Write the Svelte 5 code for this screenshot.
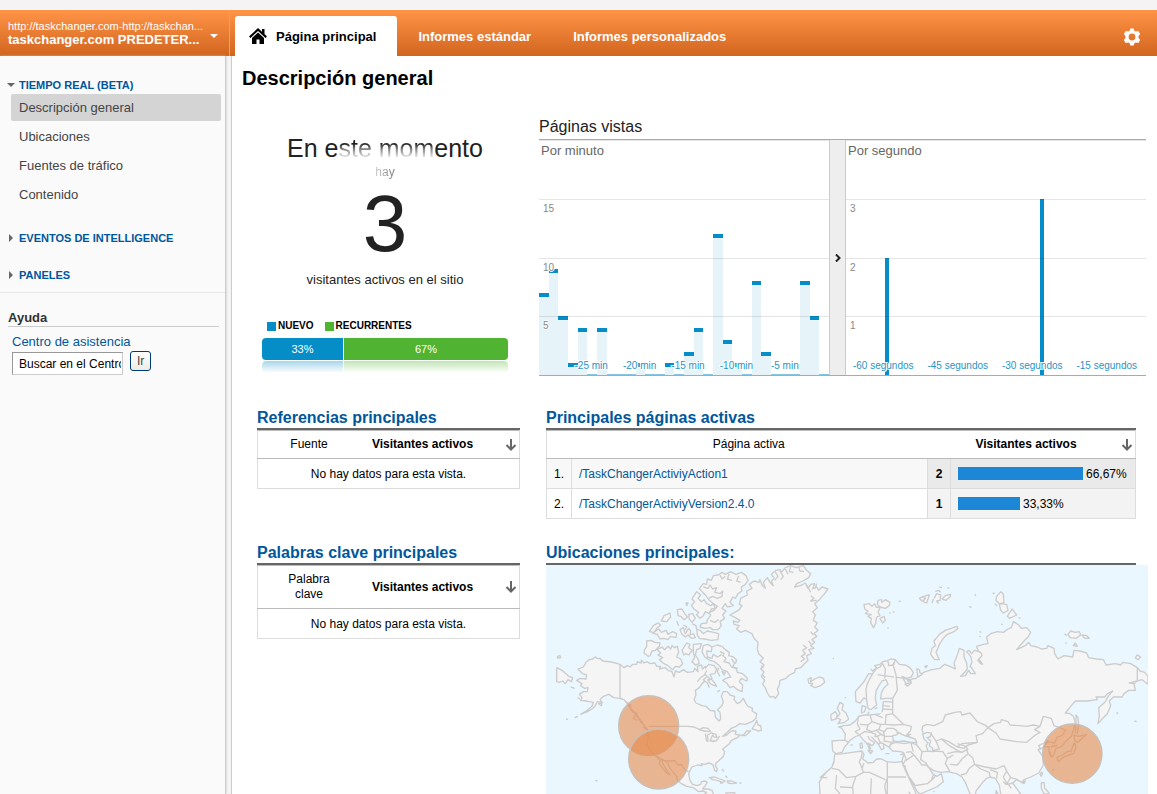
<!-- App.svelte -->
<script>
    const navItems = ["Descripción general", "Ubicaciones", "Fuentes de tráfico", "Contenido"];

    // page views, one value per minute / per second
    const minutes = [7, 9, 5, 1, 4, 0, 4, 0, 0, 0, 1, 0, 0, 1, 0, 2, 4, 0, 12, 3, 1, 0, 8, 2, 0, 0, 0, 8, 5, 0];
    const minuteLabels = ["-25 min", "-20 min", "-15 min", "-10 min", "-5 min"];
    const seconds = [
        { ago: 52.3, value: 2 },
        { ago: 21.3, value: 3 },
    ];
    const secondLabels = ["-60 segundos", "-45 segundos", "-30 segundos", "-15 segundos"];

    const activePages = [
        { name: "/TaskChangerActiviyAction1", count: 2, percent: 66.67 },
        { name: "/TaskChangerActiviyVersion2.4.0", count: 1, percent: 33.33 },
    ];

    const emptyTables = [
        { title: "Referencias principales", column: "Fuente" },
        { title: "Palabras clave principales", column: "Palabra clave" },
    ];

    // western half of the map
    const west = [
        // mainland
        "M166,366 172,371 180,370 188,378 215,381 240,388 252,398 262,392 270,396 278,388 290,388 292,380 303,384 304,376 312,384 322,380 330,386 345,384 350,394 362,394 358,402 376,398 384,406 396,410 402,426 406,408 418,412 430,404 442,412 460,410 464,400 474,410 472,394 484,390 488,402 496,394 500,408 494,418 504,426 512,434 498,434 486,446 478,458 466,466 468,480 462,494 468,504 486,512 498,514 510,526 524,528 526,546 537,558 542,552 540,532 532,524 546,512 550,500 544,484 550,470 562,470 570,480 584,484 582,494 592,506 600,502 610,490 618,506 624,514 638,520 636,528 650,536 648,550 636,560 616,568 600,566 588,574 574,580 562,592 548,604 560,600 574,588 588,588 586,598 600,600 592,608 574,616 568,626 556,636 548,642 554,650 550,664 538,676 528,684 526,692 532,702 530,710 524,706 518,688 506,684 494,688 484,686 486,692 472,690 456,696 450,706 446,718 450,736 458,748 470,752 482,748 484,740 496,738 502,742 494,754 488,762 504,762 516,766 520,777 530,790 480,790 500,772 488,768 476,770 460,758 440,754 424,746 412,736 410,724 400,712 390,700 384,684 372,676 364,674 370,688 378,702 390,720 380,714 370,702 358,686 360,676 346,662 336,652 326,638 320,628 324,614 324,596 322,582 312,574 306,560 296,550 288,536 274,522 268,508 252,496 240,490 222,488 206,478 190,484 180,494 186,502 172,500 166,512 156,522 142,530 122,538 142,526 156,514 160,502 148,500 138,498 122,496 126,488 118,478 130,470 142,470 144,458 134,460 122,452 126,446 110,436 120,430 138,432 140,420 128,416 114,402 130,396 138,382 148,374 158,372z",
        // borders and lakes
        "M240,388V490M326,574H444L462,576 480,584 498,590M540,604 524,612 518,622M346,662 372,676 390,678 404,676 414,690 424,688 436,706 446,710",
        "M478,584 490,578 504,580 512,590 494,588zM496,596 500,618 504,618 502,600 514,594 528,598 530,608 522,606 518,600 510,618 528,618 536,610",
        "M240,490 252,494 266,512 276,528 290,540 300,556 316,576M262,504 272,510 268,518M278,528 290,534 284,540 296,548M284,544 280,550 292,556M300,560 312,570 320,584 308,576",
        // aleutians, hawaii, siberian tip
        "M50,398 66,406 78,416 86,424 98,428 94,440 84,434 76,446 68,438 58,442 50,440zM52,364 60,362 62,368 54,370zM92,456 104,460M112,488 120,492M78,552 84,554M104,548 114,544M166,736 172,738M176,506 186,504 184,512z",
        // arctic islands
        "M320,318 334,316 344,322 360,324 358,334 346,346 336,348 330,362 324,364 312,354 314,344 320,334z",
        "M352,344 366,336 374,344 384,334 392,342 396,332 404,338 412,334 416,352 410,366 422,372 428,386 418,396 406,394 398,404 384,392 372,386 358,374 368,368 354,360 362,354z",
        "M430,340 440,324 450,328 446,338 456,346 446,360 438,356 432,360 426,346zM460,328 484,326 480,340 470,344 466,360 474,372 478,386 466,390 456,380 464,368 460,352z",
        "M490,332 504,328 516,336 514,350 500,348 502,366 516,370 520,358 532,366 546,358 558,370 552,380 568,384 574,396 588,400 592,412 608,416 622,430 620,438 604,430 598,440 608,450 606,470 592,464 580,454 570,458 560,444 548,436 558,430 572,426 562,410 546,404 540,394 524,380 510,376 494,366 486,350z",
        "M516,336 532,330 546,334 556,344 568,352 566,362 580,366 590,376 586,386M540,350 552,356 548,364M574,372 584,384 578,396 594,400",
        "M470,282 480,286 490,296 502,288 520,292 536,296 534,314 514,316 494,312 478,310 472,300zM420,284 430,278 436,296 446,280 452,288 450,300 460,296 466,308 454,310 444,300 436,306 426,298z",
        "M328,290 340,272 354,264 362,270 350,280 342,292zM338,294 356,282 364,292 378,286 384,298 398,290 410,296 408,308 392,304 384,314 372,310 360,312 352,298z",
        "M364,258 372,242 390,234 392,246 380,260zM412,224 426,222 434,236 442,246 432,254 422,244 414,242zM446,238 458,236 466,250 456,262 448,252zM438,204 444,204 440,212zM410,258 416,272M456,266 468,272 470,284M430,270 440,276 436,284",
        "M462,182 470,170 482,180 474,190 484,200 492,194 500,206 512,212 520,206 526,220 514,222 508,236 496,230 490,242 480,250 470,240 476,232 462,222 454,212 464,200 456,192z",
        "M478,160 490,146 500,148 502,132 514,136 520,122 534,120 546,112 556,118 572,110 588,118 604,112 618,122 624,136 616,148 604,156 606,168 594,176 586,190 578,186 570,202 580,212 562,216 556,206 546,220 558,228 548,240 554,250 540,260 544,272 534,284 518,284 512,278 494,280 480,276 484,266 500,264 502,254 512,242 508,232 522,226 532,214 520,206 508,196 498,182 488,172z",
        "M490,156 504,160 510,150 518,162 530,158 524,172 540,176 548,168 546,184 532,190 518,184 506,190M540,120 546,132 556,124M568,116 562,132 576,136M596,122 590,138 602,142M510,256 524,262 536,254",
        "M496,400 506,388 522,392 530,402 524,416 510,418 516,430 504,438 514,448 530,454 524,444 512,430M500,426 490,434 502,444 508,458M536,398 532,410 540,424M546,410 556,412 552,420zM532,470 540,466M496,418 480,430 472,440",
        // newfoundland
        "M636,582 646,566 650,556 654,570 662,572 664,586 654,588 646,584zM602,602 612,598 620,588 632,588 616,602z",
        // caribbean
        "M508,728 524,726 540,732 556,738 548,742 532,736 518,734zM562,738 576,738 590,744 574,746 564,744zM598,744H604M540,744H548M546,702 552,710M556,722 562,728M558,774 584,773 590,790 556,790z",
        // greenland
        "M570,240 584,232 598,224 606,212 598,208 602,190 622,180 620,168 636,160 628,148 642,138 656,142 660,134 666,150 676,160 670,142 682,128 690,142 700,152 694,138 704,130 694,118 708,106 720,104 724,112 736,98 752,92 768,98 790,92 800,106 812,116 806,128 788,138 770,146 764,156 782,152 796,144 804,160 812,148 824,146 818,162 830,156 836,166 846,156 864,162 852,178 838,194 824,206 832,218 818,230 826,240 820,256 832,264 824,276 834,286 822,296 830,304 816,314 824,322 812,332 822,340 806,344 814,356 800,362 804,376 792,388 782,398 766,402 764,412 748,420 738,430 720,436 718,450 712,462 716,476 706,490 700,484 690,486 682,474 676,458 668,448 674,436 664,424 672,410 662,402 672,390 660,380 670,370 656,356 652,342 654,322 642,310 636,296 616,286 602,292 590,282 598,272 582,268 580,258 594,262 600,256 586,248z",
        "M704,108 714,124 704,136M720,108 730,124 722,134M736,102 744,118M752,94 748,110 760,112M776,96 780,108 792,110M800,150 812,172M830,146 826,160M790,330 800,338 788,346 796,356 784,364 794,372 782,380M812,290 820,300M806,318 814,328M664,392 670,400M668,420 676,428M812,182 822,190 812,198 830,196",
        // iceland
        "M804,432 814,428 812,440 824,432 838,426 850,430 854,442 842,452 826,458 812,452 818,446 806,444zM878,370H882M914,488H918",
    ];

    // eastern half of the map
    const east = [
        // eurasia
        "M92,402 98,408 110,398 104,392 120,388 128,380 140,378 152,372 166,374 178,388 196,390 210,398 220,412 214,426 200,430 186,424 192,434 210,434 214,444 202,454 194,446M194,430 204,440 216,432 228,430 240,418 256,410 276,404 300,400 314,388 330,394 346,402 342,384 352,360 358,340 372,346 372,366 380,384 382,402 374,412 362,424 376,422 386,406 392,416 406,416 396,400 390,394 396,382 392,364 380,350 388,346 394,356 404,346 416,352 410,334 430,328 444,326 440,306 452,296 472,290 490,292 504,282 514,278 520,260 534,268 544,280 560,278 572,292 564,306 552,318 538,334 530,344 556,332 566,322 572,332 592,336 604,342 620,340 624,332 642,340 644,356 654,372 672,362 698,366 702,346 720,348 740,354 746,368 770,372 790,374 798,390 826,386 842,390 848,382 872,386 892,398 900,408 914,412 924,424 924,448 906,434 890,438 882,446 886,466 866,466 852,476 846,486 820,486 808,498 812,512 802,536 790,548 774,566 778,544 776,518 796,500 806,482 818,468 802,476 794,486 768,486 772,494 742,498 706,498 692,514 676,534 690,536 700,544 706,560 700,586 694,604 676,620 666,634 648,640 640,662 632,664 626,648 628,636 614,634 602,642 596,632 612,624 624,620 606,640 594,644 608,664 610,690 596,714 572,726 552,734 546,742 530,734 518,744 528,758 542,777 500,790 482,777 478,750 466,730 450,726 440,730 428,742 408,768 404,790 390,777 376,742 366,726 350,716 322,710 304,712 292,710 280,706 262,694 258,684 272,706 280,718 290,724 304,716 310,740 290,756 240,777 232,770 206,724 192,690 182,690 186,678 192,656 190,652 180,650 158,648 148,638 152,626 170,622 192,626 212,622 230,630 226,620 208,610 196,604 212,598 200,600 188,608 180,598 170,606 162,616 154,628 146,636 130,626 132,640 124,644 116,628 104,616 92,602 82,598 88,612 104,624 96,632 84,624 92,640 88,644 84,630 66,610 58,600 44,606 30,616 14,636 6,652 -12,656 -22,648 -24,618 -2,616 14,616 16,598 6,580 -4,576 14,572 30,570 44,560 58,544 72,540 90,540 104,538 126,536 128,520 130,500 146,500 158,502 158,490 136,490 122,492 124,474 132,458 144,448 138,434 126,438 118,450 108,468 106,490 110,510 92,524 84,520 80,494 72,488 60,504 48,500 46,470 58,456 72,440 86,416z",
        "M144,378 146,392 158,390 164,380M128,386 136,402 134,430M166,374 160,392 168,420 172,466 158,490M128,386 120,396 108,402 98,416 90,430 82,446 78,464 80,494",
        // african coast
        "M-16,658 10,656 36,652 66,648 72,658 68,672 84,684 100,682 110,672 124,672 140,680 164,682 186,680 196,706 208,732 226,770 230,790 -90,790 -60,777 -62,740 -42,712 -28,700 -18,680z",
        "M66,650 64,668 58,680 66,700 70,712 48,724 20,728 -4,704 -24,700M66,700 72,684M70,712 88,712 136,734M142,680V777M142,726H198M48,724 38,752 40,790M94,730 92,777M0,756 38,758M-10,720 -14,760 0,777M-60,728 -38,728M-18,680 -24,696 -60,728M142,728 134,752 138,777M206,770 220,790",
        // europe
        "M56,542 52,566 60,582 46,590 58,600M90,540 96,560 84,570 60,568M96,560 120,568 136,568 138,540 158,536 158,502M84,570 80,584 96,590 116,584 122,570M58,600 74,590 92,592 108,598 104,606M116,584 134,590 140,580 160,580 170,586 174,600 160,604 134,604 130,590M136,568 160,570 190,568 214,574 212,586 200,600M158,536 178,556 190,568M106,606 124,598 134,604 132,618 156,622M124,598 110,588M112,602 120,622 130,626M116,628 124,620M104,538 128,548M126,522 158,524M128,512 150,514M14,616 28,622",
        "M0,502 10,508 6,524 18,534 26,552 14,562 -6,566 2,554 -10,548 0,536 -8,520zM-28,540 -14,530 -8,540 -12,552 -26,556zM66,512 78,516 74,530 64,534zM82,536 88,530M104,522 112,518",
        "M60,626 66,624 68,638 62,640zM84,646 98,648 92,656zM136,656H148M180,660 190,656M32,630H38",
        // middle east and central asia
        "M192,656 198,672 188,690 198,694M198,652 212,650 222,660 246,690 258,690M220,650 212,622M230,630 246,650 242,674 258,684M246,650 276,648 308,650 322,670 316,686 330,710M222,660 198,676M206,724 226,752 236,750 262,746 274,736 286,724M274,736 280,720M322,656 346,650 366,652 380,644 384,656 366,672 352,690 330,688M322,670 340,660M384,656 398,668 404,688 388,700 378,716 362,720M404,688 436,696 468,702 492,692 500,708 490,726M404,688 422,702 448,712 450,726M450,704 472,712 470,730M500,708 512,728 534,734M490,726 502,748 518,744M500,750 490,740M512,728 502,744 514,760",
        "M248,574 260,568 282,572 308,560 316,540 344,532 362,530 366,540 390,534 412,560 438,572 444,578 428,596 408,602 412,622 388,624 366,626 352,636 326,620 304,612 288,618 274,598 250,596 246,584z",
        "M288,618 298,642 276,648M304,612 328,632 352,646 366,652M352,636 372,640 384,630 412,622M352,626 378,634 384,644",
        "M444,578 462,566 482,562 484,554 504,560 510,570 538,572 560,574 580,570 600,574 584,584 600,592 586,600 560,622 530,620 480,612 468,594zM600,574 610,544 634,550 642,572 666,580 676,586 668,600 650,608 644,624 624,620M626,620 616,614M632,636 652,630",
        // islands of the arctic ocean
        "M72,208 88,206 96,214 104,206 108,216 120,218 114,232 120,242 110,246 106,268 100,278 92,262 94,250 84,244 94,238 76,236 84,228 74,222zM114,196 124,194 126,202 136,194 150,202 148,212 136,220 120,216 112,208zM120,250 132,244 136,256 128,264zM148,234H152M158,232 164,230M176,200 182,198M142,278 146,280",
        "M238,190 250,184 256,192 246,198zM256,182 268,180 260,204 250,200zM282,190 290,176 302,180 300,196 290,198 296,206M306,192 316,182 332,178 330,186 318,196zM286,170 296,166 302,172M298,156 306,158M322,158 328,160M404,178 408,182M388,214 394,218M276,204 280,192",
        "M470,184 482,170 490,176 492,204 478,206 468,196zM478,206 500,208 504,226 490,234 482,226zM502,244 516,222 522,230 530,240 508,250zM536,248 542,250M458,174 464,176M464,206 472,212M484,266 488,270M418,290 424,292M418,304 422,306",
        "M350,274 354,280 342,290 322,298 310,310 298,328 292,344 288,352 298,374 284,374 272,358 276,340 286,332 282,318 298,298 316,286 334,280z",
        "M230,402 238,404 240,414 246,418 234,426zM254,394 262,392 258,398zM404,346 422,352 426,362 416,372 428,388 422,386 412,374",
        "M684,298 692,288 706,292 718,290 722,300 708,310 690,308zM726,300 740,302 748,310 734,310zM700,332 706,324 712,334zM674,296 680,302M676,324H680M886,368 892,360 902,366 894,374zM884,558 890,560M830,532 834,536",
        "M892,398V438L868,444 886,446",
        // sakhalin, japan, taiwan, luzon
        "M708,540 714,548 716,572 712,594 706,592 708,568zM702,600 716,604 740,598 724,612 714,622 704,616zM704,622 708,640 700,656 686,660 668,668 656,680 650,668 668,660 680,650 694,648 698,634zM640,662 634,666 630,650M604,712 608,714 604,724 600,718zM604,744 612,742 614,760 624,770 628,777 612,777 604,760zM636,706 642,704",
        "M544,742 556,738 552,746zM468,766 474,777 468,777zM280,770H284",
    ];

    // inland seas drawn over the land
    const seas = [
        "M248,598 260,592 274,594 270,606 262,608 272,618 268,632 278,640 278,650 264,648 258,632 264,624 252,612z",
        "M158,602 170,600 176,592 186,598 194,602 208,606 226,612 230,622 212,622 192,618 172,620 160,618z",
        "M190,432 198,430 204,438 212,436 210,444 198,446z",
    ];
</script>

<div class="app">
    <div class="strip"></div>
    <header class="topbar">
        <button class="account" type="button">
            <span class="account-text">
                <span class="account-url">http://taskchanger.com-http://taskchan...</span>
                <strong>taskchanger.com PREDETER...</strong>
            </span>
            <svg width="8" height="4" viewBox="0 0 8 4" aria-hidden="true"><path d="M0 0h8L4 4z" fill="#fff" /></svg>
        </button>
        <nav class="tabs">
            <a class="tab active" href="#home">
                <svg width="20" height="18" viewBox="0 0 20 18" aria-hidden="true">
                    <path d="M10 1 1 9.500l1.500 1.500L10 4l7.500 7L19 9.500l-2.500-2.400V2h-2.500v2.700z" />
                    <path d="M10 5.500 4 11v6h4.500v-4.500h3V17H16v-6z" />
                </svg>
                Página principal
            </a>
            <a class="tab" href="#standard">Informes estándar</a>
            <a class="tab" href="#custom">Informes personalizados</a>
        </nav>
        <button class="gear" type="button" aria-label="Configuración">
            <svg width="18" height="18" viewBox="0 0 18 18" aria-hidden="true">
                <path
                    fill="#fff"
                    fill-rule="evenodd"
                    d="M7.300 0.500h3.400l.6 2.300 1.400.8 2.600-.7 1.900 3.100-1.700 1.900v2.200l1.700 1.900-1.900 3.100-2.600-.7-1.400.8-.6 2.300H7.300l-.6-2.300-1.400-.8-2.600.7L.8 12l1.700-1.900V7.900L.8 6l1.900-3.100 2.600.7 1.400-.8zM9 5.600a3.400 3.400 0 1 0 0 6.800 3.400 3.400 0 0 0 0-6.800z"
                />
            </svg>
        </button>
    </header>

    <div class="body">
        <aside class="sidebar">
            <nav class="menu">
                <a class="menu-title" href="#realtime">
                    <svg width="8" height="8" viewBox="0 0 8 8" aria-hidden="true"><path d="M0 2h8L4 6z" /></svg>
                    TIEMPO REAL (BETA)
                </a>
                <ul>
                    {#each navItems as item, i}
                        <li><a class:selected={i == 0} href="#nav-{i}">{item}</a></li>
                    {/each}
                </ul>
                <a class="menu-title" href="#intelligence">
                    <svg width="8" height="8" viewBox="0 0 8 8" aria-hidden="true"><path d="M2 0v8l4-4z" /></svg>
                    EVENTOS DE INTELLIGENCE
                </a>
                <a class="menu-title" href="#dashboards">
                    <svg width="8" height="8" viewBox="0 0 8 8" aria-hidden="true"><path d="M2 0v8l4-4z" /></svg>
                    PANELES
                </a>
            </nav>
            <section class="help">
                <h2>Ayuda</h2>
                <form onsubmit={(e) => e.preventDefault()}>
                    <a href="#help">Centro de asistencia</a>
                    <div class="search">
                        <input type="text" aria-label="Buscar en el Centro de asistencia" value="Buscar en el Centro de asistencia" />
                        <button type="submit">Ir</button>
                    </div>
                </form>
            </section>
        </aside>

        <main>
            <h1>Descripción general</h1>

            <div class="overview">
                <section class="now">
                    <p class="now-title">En e<span>ste mom</span>ento</p>
                    <p class="now-there">hay</p>
                    <p class="now-count">3</p>
                    <p class="now-text">visitantes activos en el sitio</p>
                    <div class="legend">
                        <span class="new">NUEVO</span>
                        <span class="returning">RECURRENTES</span>
                    </div>
                    <div class="split">
                        <div class="new" style="width: 33%">33%</div>
                        <div class="returning" style="width: 67%">67%</div>
                    </div>
                    <div class="split reflection">
                        <div class="new" style="width: 33%"></div>
                        <div class="returning" style="width: 67%"></div>
                    </div>
                </section>

                <section class="views">
                    <h2>Páginas vistas</h2>
                    <div class="charts">
                        <div class="chart per-minute">
                            <h3>Por minuto</h3>
                            <div class="bars">
                                {#each minutes as value}
                                    <div class="bar" class:zero={value == 0} style="height: {value * 5}%"></div>
                                {/each}
                            </div>
                            <div class="levels">
                                <span></span><span>15</span><span>10</span><span>5</span>
                            </div>
                            <div class="times">
                                {#each minuteLabels as label}
                                    <span>{label}</span>
                                {/each}
                            </div>
                        </div>
                        <button class="toggle" type="button" aria-label="Ampliar">
                            <svg width="6" height="8" viewBox="0 0 6 8" aria-hidden="true">
                                <path d="M1 0.500 4.500 4 1 7.500" fill="none" stroke="#222" stroke-width="2" />
                            </svg>
                        </button>
                        <div class="chart per-second">
                            <h3>Por segundo</h3>
                            {#each seconds as s}
                                <div class="spike" style="left: {100 - s.ago / 0.6}%; height: {s.value * 25}%"></div>
                            {/each}
                            <div class="levels">
                                <span></span><span>3</span><span>2</span><span>1</span>
                            </div>
                            <div class="times">
                                {#each secondLabels as label}
                                    <span>{label}</span>
                                {/each}
                            </div>
                        </div>
                    </div>
                </section>
            </div>

            <div class="reports">
                {#snippet arrow()}
                    <svg width="12" height="12" viewBox="0 0 12 12" role="img" aria-label="Descendente">
                        <path d="M6 0v10M1.500 6 6 10.500 10.500 6" fill="none" stroke="#666" stroke-width="2" />
                    </svg>
                {/snippet}

                {#snippet emptyTable(table)}
                    <section>
                        <h2>{table.title}</h2>
                        <table class="empty">
                            <thead>
                                <tr>
                                    <th class="dimension">{table.column}</th>
                                    <th class="metric">Visitantes activos</th>
                                    <th class="sort">{@render arrow()}</th>
                                </tr>
                            </thead>
                            <tbody>
                                <tr><td colspan="3">No hay datos para esta vista.</td></tr>
                            </tbody>
                        </table>
                    </section>
                {/snippet}

                {@render emptyTable(emptyTables[0])}

                <section>
                    <h2>Principales páginas activas</h2>
                    <table class="pages">
                        <colgroup>
                            <col class="col-index" /><col /><col class="col-count" /><col class="col-bar" /><col class="col-sort" />
                        </colgroup>
                        <thead>
                            <tr>
                                <th class="dimension" colspan="3">Página activa</th>
                                <th class="metric">Visitantes activos</th>
                                <th class="sort">{@render arrow()}</th>
                            </tr>
                        </thead>
                        <tbody>
                            {#each activePages as page, i}
                                <tr>
                                    <td>{i + 1}.</td>
                                    <td class="name"><a href="#page-{i}">{page.name}</a></td>
                                    <td class="count">{page.count}</td>
                                    <td class="share" colspan="2">
                                        <div>
                                            <i style="width: {Math.round(page.percent * 1.875)}px"></i>
                                            {page.percent.toFixed(2).replace(".", ",")}%
                                        </div>
                                    </td>
                                </tr>
                            {/each}
                        </tbody>
                    </table>
                </section>

                {@render emptyTable(emptyTables[1])}

                <section>
                    <h2>Ubicaciones principales:</h2>
                    <svg class="map" viewBox="0 0 1806 687" role="img" aria-label="Mapa de visitantes activos">
                        <g transform="translate(-18 -90)">
                            {#each west as d}
                                <path class="land" {d} />
                            {/each}
                        </g>
                        <g transform="translate(882 -90)">
                            {#each east as d}
                                <path class="land" {d} />
                            {/each}
                            {#each seas as d}
                                <path class="sea" {d} />
                            {/each}
                        </g>
                        <circle cx="308" cy="482" r="90" />
                        <circle cx="338" cy="582" r="90" />
                        <circle cx="1579" cy="566" r="89" />
                    </svg>
                </section>
            </div>
        </main>
    </div>
</div>

<style>
    :global(body) {
        margin: 0;
        font-family: "Liberation Sans", Arial, sans-serif;
        font-size: 12px;
        color: #000;
        background: #fff;
    }

    .app {
        display: flex;
        flex-direction: column;
        height: 100vh;
        overflow: hidden;
    }

    h1, h2, h3, p, ul {
        margin: 0;
        padding: 0;
    }

    a {
        color: #00579c;
        text-decoration: none;
    }

    button {
        font-family: inherit;
        cursor: pointer;
    }

    .strip {
        flex: none;
        height: 10px;
        background: #f4f4f4;
    }

    .topbar {
        display: flex;
        flex: none;
        height: 46px;
        background: linear-gradient(#ff9447, #d2651e);
    }

    .account {
        display: flex;
        align-items: center;
        justify-content: space-between;
        width: 230px;
        padding: 0 11px 0 8px;
        border: 0;
        border-right: 1px solid #f0a068;
        background: none;
        color: #fff;
        text-align: left;
    }

    .account svg {
        margin-bottom: -5px;
    }

    .account-text {
        display: flex;
        flex-direction: column;
        font-size: 13px;
        line-height: 14px;
        white-space: nowrap;
    }

    .account-url {
        font-size: 11px;
    }

    .tabs {
        display: flex;
        flex: 1;
        align-items: flex-end;
        padding-left: 5px;
    }

    .tab {
        display: flex;
        align-items: center;
        gap: 8px;
        height: 40px;
        padding: 0 21px;
        color: #fff;
        font-size: 13px;
        font-weight: bold;
    }

    .tab.active {
        padding-left: 13px;
        border-radius: 3px 3px 0 0;
        background: #fff;
        color: #000;
    }

    .gear {
        padding: 10px 16px 0;
        border: 0;
        background: none;
    }

    .body {
        display: flex;
        flex: 1;
        min-height: 0;
        background: #f4f4f4;
    }

    .sidebar {
        flex: none;
        width: 225px;
        margin-right: 5px;
        border-right: 1px solid #ccc;
        background: #fafafa;
        box-shadow: 0 0 2px #bbb;
    }

    .menu {
        padding: 20px 0 8px;
        border-bottom: 1px solid #e8e8e8;
    }

    .menu-title {
        display: flex;
        align-items: center;
        gap: 4px;
        padding-left: 7px;
        font-size: 11px;
        font-weight: bold;
        line-height: 18px;
    }

    .menu-title svg {
        fill: #666;
    }

    .menu-title + .menu-title {
        margin-top: 19px;
    }

    .menu ul {
        display: flex;
        flex-direction: column;
        gap: 2px;
        margin-bottom: 21px;
        padding: 0 4px 0 11px;
        list-style: none;
    }

    .menu li a {
        display: block;
        padding-left: 8px;
        border-radius: 2px;
        color: #444;
        font-size: 13px;
        line-height: 27px;
    }

    .menu li a.selected {
        background: #d4d4d4;
    }

    .help {
        padding: 17px 6px 0 8px;
    }

    .help h2 {
        border-bottom: 1px solid #ccc;
        color: #333;
        font-size: 13px;
        line-height: 16px;
    }

    .help form {
        padding: 7px 0 0 4px;
        font-size: 13px;
        line-height: 16px;
    }

    .search {
        display: flex;
        align-items: flex-start;
        gap: 7px;
        padding-top: 1px;
    }

    .search input {
        box-sizing: border-box;
        width: 111px;
        height: 23px;
        margin-top: 1px;
        padding: 0 1px 0 6px;
        border: 1px solid #ccc;
        border-top-color: #999;
        border-left-color: #999;
        font-family: inherit;
        font-size: 12px;
    }

    .search button {
        height: 20px;
        padding: 0 6px;
        border: 1px solid #003c74;
        border-radius: 3px;
        background: linear-gradient(#fff, #ecebe5);
        color: #444;
        font-size: 12px;
    }

    main {
        flex: 1;
        min-width: 0;
        border-left: 1px solid #ccc;
        background: #fff;
    }

    h1 {
        padding: 10px 10px 0;
        font-size: 20px;
        line-height: 24px;
    }

    .overview {
        display: grid;
        grid-template-columns: 246px 1fr;
        gap: 31px;
        padding: 27px 11px 0 30px;
    }

    .now {
        padding-top: 15px;
        color: #222;
        text-align: center;
    }

    .now-title {
        font-size: 25px;
        line-height: 32px;
    }

    .now-title span {
        background: linear-gradient(#222 35%, #888 55%, #ddd 80%);
        background-clip: text;
        color: transparent;
    }

    .now-there {
        background: linear-gradient(90deg, #ccc 46%, #777 54%);
        background-clip: text;
        color: transparent;
        font-size: 12px;
        line-height: 16px;
    }

    .now-count {
        padding: 4px 0 8px;
        font-size: 80px;
        line-height: 80px;
    }

    .now-text {
        font-size: 13px;
        line-height: 16px;
    }

    .legend {
        display: flex;
        gap: 11px;
        padding: 30px 5px 4px;
        color: #000;
        font-size: 10px;
        font-weight: bold;
        line-height: 16px;
    }

    .legend span {
        display: flex;
        align-items: center;
        gap: 2px;
    }

    .legend span::before {
        width: 9px;
        height: 9px;
        background: #058dc7;
        content: "";
    }

    .legend .returning::before {
        background: #50b432;
    }

    .split {
        display: flex;
        gap: 1px;
        overflow: hidden;
        border-radius: 4px;
        color: #fff;
        font-size: 11px;
        line-height: 22px;
    }

    .split .new {
        background: #058dc7;
    }

    .split .returning {
        background: #50b432;
    }

    .reflection {
        height: 12px;
        margin-top: 1px;
        opacity: 0.35;
        mask-image: linear-gradient(#000, transparent);
    }

    .views h2 {
        padding-bottom: 2px;
        color: #222;
        font-size: 16px;
        font-weight: normal;
        line-height: 20px;
    }

    .charts {
        display: flex;
        height: 235px;
        border-top: 1px solid #aaa;
        border-bottom: 1px solid #aaa;
    }

    .chart {
        position: relative;
    }

    .per-minute {
        flex: 290;
    }

    .per-second {
        flex: 300;
    }

    .chart h3 {
        position: absolute;
        top: 3px;
        left: 2px;
        color: #666;
        font-size: 13px;
        font-weight: normal;
        line-height: 16px;
    }

    .bars {
        display: flex;
        align-items: flex-end;
        height: 100%;
    }

    .bar {
        box-sizing: border-box;
        flex: 1;
        border-top: 4px solid #058dc7;
        background: #e6f3f9;
    }

    .bar.zero {
        border-top: 1px solid #82c6e3;
    }

    .spike {
        position: absolute;
        bottom: 0;
        width: 4px;
        background: #058dc7;
    }

    /* grid lines run over the bars */
    .levels {
        position: absolute;
        inset: 0;
        display: grid;
        grid-template-rows: repeat(4, 1fr);
        color: #888;
        font-size: 10px;
        line-height: 17px;
        text-shadow: 1px 0 #fff, -1px 0 #fff, 0 1px #fff, 0 -1px #fff;
    }

    .levels span {
        padding-left: 4px;
        border-top: 1px solid rgba(0, 0, 0, 0.1);
    }

    .times {
        position: absolute;
        right: 0;
        bottom: 1px;
        left: 0;
        display: flex;
        color: #2a93c6;
        font-size: 10px;
        line-height: 16px;
        text-align: center;
        text-shadow: 1px 0 #fff, -1px 0 #fff, 0 1px #fff, 0 -1px #fff, 1px 1px #fff, -1px -1px #fff;
        white-space: nowrap;
    }

    .times span {
        flex: 1;
    }

    .per-second .times {
        right: 2px;
    }

    .per-minute .times {
        right: 20px;
        left: 28px;
    }

    .toggle {
        flex: none;
        width: 17px;
        padding: 0;
        border: 0;
        border-right: 1px solid #ccc;
        border-left: 1px solid #ccc;
        background: #eee;
    }

    .reports {
        display: grid;
        grid-template-columns: 263px 1fr;
        gap: 23px 26px;
        padding: 31px 21px 0 25px;
    }

    .reports h2 {
        padding-top: 1px;
        border-bottom: 2px solid #666;
        color: #00579c;
        font-size: 16px;
        line-height: 20px;
    }

    table {
        width: 100%;
        border: 1px solid #ddd;
        border-top-color: #bbb;
        border-collapse: collapse;
        table-layout: fixed;
        text-align: center;
    }

    th {
        height: 27px;
        padding: 0;
        border-bottom: 1px solid #bbb;
        line-height: 15px;
    }

    td {
        height: 29px;
        padding: 0;
        border-bottom: 1px solid #ddd;
    }

    th svg {
        display: block;
        margin-left: auto;
        margin-right: 2px;
    }

    .dimension {
        font-weight: normal;
    }

    .empty .dimension {
        width: 62px;
        height: 15px;
        padding: 6px 20px;
    }

    .empty .sort {
        width: 34px;
    }

    .col-index {
        width: 25px;
    }

    .col-count {
        width: 23px;
    }

    .col-bar {
        width: 151px;
    }

    .col-sort {
        width: 34px;
    }

    .pages td {
        border-right: 1px solid #ddd;
    }

    .pages tbody tr:first-child td {
        background: #f8f8f8;
    }

    .pages .name {
        padding-left: 7px;
        text-align: left;
    }

    .pages .count {
        font-weight: bold;
    }

    .pages tbody tr .count,
    .pages tbody tr .share {
        background: #f3f3f3;
    }

    .pages tbody tr:first-child .count,
    .pages tbody tr:first-child .share {
        background: #eaeaea;
    }

    .share div {
        display: flex;
        align-items: center;
        gap: 3px;
        padding-left: 7px;
    }

    .share i {
        height: 13px;
        background: #1b87d6;
    }

    .map {
        display: block;
        width: calc(100% + 12px);
        background: #eaf7fe;
    }

    .land {
        fill: #f5f5f5;
        stroke: #ccc;
        stroke-width: 4;
        stroke-linejoin: round;
    }

    .sea {
        fill: #eaf7fe;
        stroke: #ccc;
        stroke-width: 4;
    }

    .map circle {
        fill: #e6884a;
        fill-opacity: 0.6;
        stroke: #c4c0bc;
        stroke-width: 4;
    }
</style>
